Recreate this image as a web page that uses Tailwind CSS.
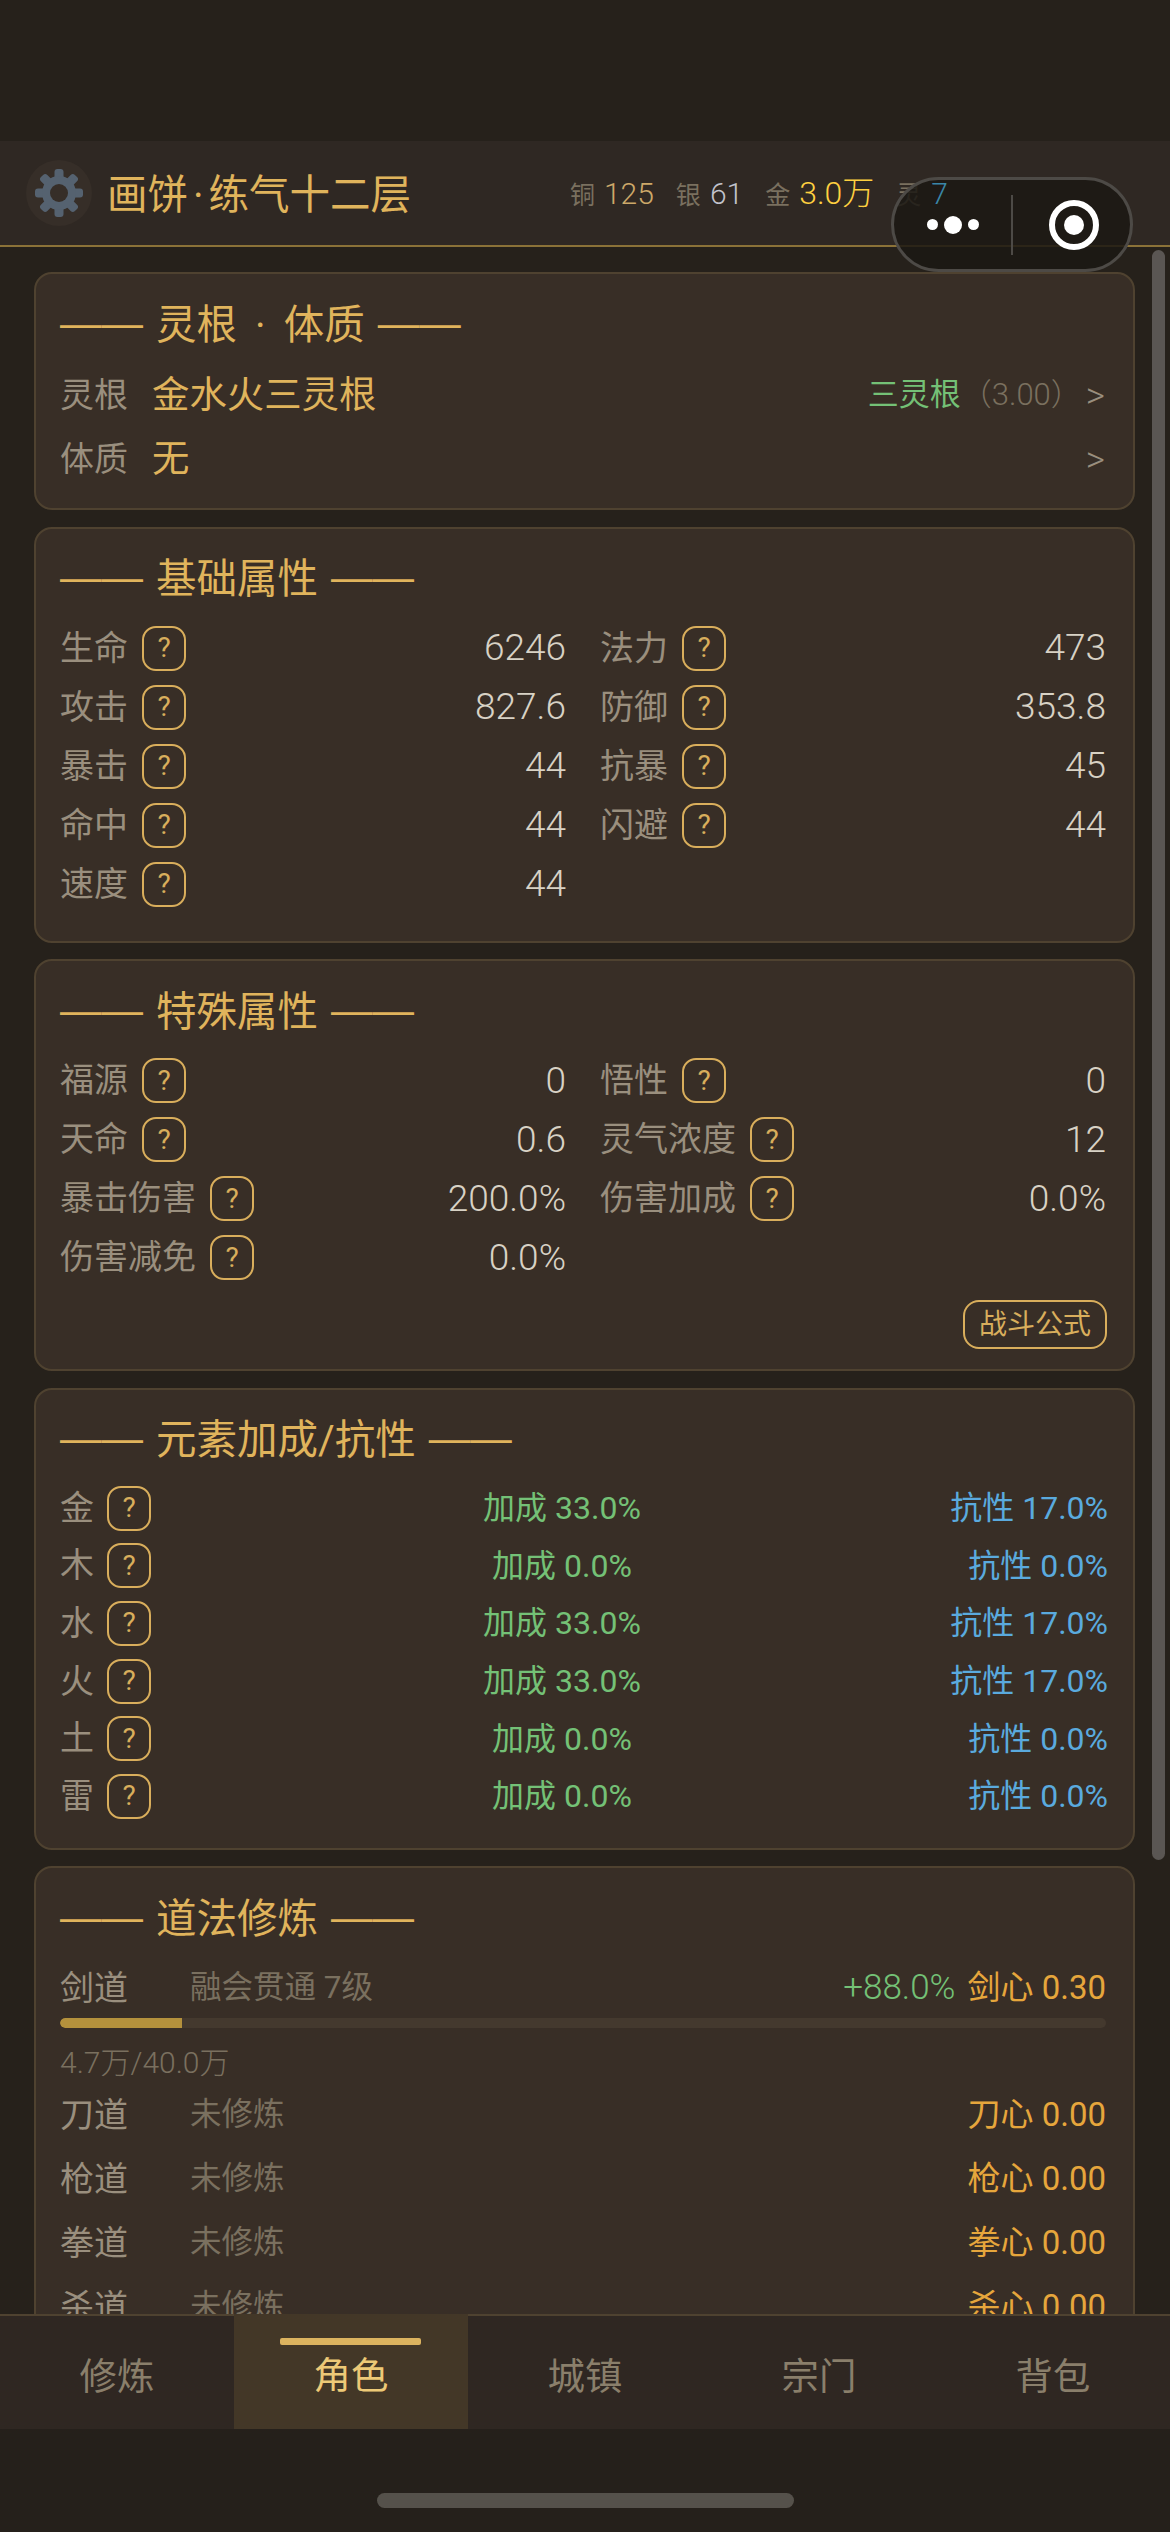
<!doctype html>
<html lang="zh"><head><meta charset="utf-8">
<script src="https://cdn.jsdelivr.net/npm/@tailwindcss/browser@4"></script></head>
<body class="m-0 bg-[#26211b]">
<div class="relative w-[1170px] h-[2532px] overflow-hidden flex flex-col bg-[#26211b] font-['Roboto','Noto_Sans_CJK_SC',sans-serif] font-normal text-[34px] text-[#9a8f7e]">
  <div class="h-[141px] shrink-0"></div>
  <header class="h-[106px] shrink-0 flex items-center bg-[#2f2823] border-b-2 border-[#8b7238] pl-[26px] pr-[222px]">
    <div class="w-[66px] h-[66px] rounded-full bg-[#362e28] flex items-center justify-center mr-[15px]">
      <svg width="50" height="50" viewBox="0 0 50 50"><g fill="#556270"><rect x="20.5" y="1" width="9" height="48" rx="3"/><rect x="20.5" y="1" width="9" height="48" rx="3" transform="rotate(45 25 25)"/><rect x="20.5" y="1" width="9" height="48" rx="3" transform="rotate(90 25 25)"/><rect x="20.5" y="1" width="9" height="48" rx="3" transform="rotate(135 25 25)"/></g><circle cx="25" cy="25" r="13" fill="none" stroke="#556270" stroke-width="8"/><circle cx="25" cy="25" r="9" fill="#362e28"/></svg>
    </div>
    <div class="pt-[4px] text-[40.5px] text-[#e0b45c] whitespace-nowrap">画饼<span class="mx-[5px]">·</span>练气十二层</div>
    <div class="ml-auto flex items-baseline whitespace-nowrap text-[25px] text-[#7a705f]">
      <span>铜</span><span class="text-[30px] font-light ml-[9px] text-[#cda869]">125</span>
      <span class="ml-[22px]">银</span><span class="text-[30px] font-light ml-[9px] text-[#c2c3cc]">61</span>
      <span class="ml-[22px]">金</span><span class="text-[32px] font-light ml-[9px] text-[#ffd040]">3.0万</span>
      <span class="ml-[22px]">灵</span><span class="relative z-10 text-[30px] font-light ml-[10px] text-[#3a87a8]">7</span>
    </div>
  </header>
  <main class="flex-1 min-h-0 overflow-hidden pt-[25px] pl-[34px] flex flex-col gap-[16.5px]">
    <section class="shrink-0 w-[1101px] h-[238px] box-border rounded-[18px] border-2 border-[#4f4230] bg-[#382e26] px-[24px] pt-[18px]">
      <h2 class="h-[62px] pt-[4px] flex items-center gap-[13px] text-[40.5px] font-normal text-[#e0b45c] whitespace-pre"><span class="-translate-y-[2px] font-['Liberation_Sans',sans-serif] text-[41.5px]">——</span><span>灵根 <span class="mx-[8px]">·</span> 体质</span><span class="-translate-y-[2px] font-['Liberation_Sans',sans-serif] text-[41.5px]">——</span></h2>
      <div class="mt-[10px] h-[63px] flex items-center"><span class="w-[92px]">灵根</span><span class="text-[37.4px] text-[#e0b45c]">金水火三灵根</span><span class="ml-auto text-[31px] text-[#74c176]">三灵根</span><span class="text-[31px] font-light text-[#7a705f]">（3.00）</span><span class="text-[37px] font-light ml-[4px] mr-[4px]">&gt;</span></div>
      <div class="h-[63px] pt-[2px] flex items-center"><span class="w-[92px]">体质</span><span class="text-[37.4px] text-[#e0b45c]">无</span><span class="ml-auto text-[37px] font-light mr-[4px]">&gt;</span></div>
    </section>

    <section class="shrink-0 w-[1101px] h-[416px] box-border rounded-[18px] border-2 border-[#4f4230] bg-[#382e26] px-[24px] pt-[18px]">
      <h2 class="h-[62px] pt-[4px] flex items-center gap-[13px] text-[40.5px] font-normal text-[#e0b45c] whitespace-pre"><span class="-translate-y-[2px] font-['Liberation_Sans',sans-serif] text-[41.5px]">——</span><span>基础属性</span><span class="-translate-y-[2px] font-['Liberation_Sans',sans-serif] text-[41.5px]">——</span></h2>
      <div class="mt-[10px] grid grid-cols-2 gap-x-[34px] auto-rows-[59px] pr-[3px]">
        <div class="flex items-center"><span>生命</span><span class="ml-[14px] w-[44px] h-[45px] box-border rounded-[14px] border-2 border-[#d9ae5c] flex items-center justify-center text-[28px] text-[#d9ae5c]">?</span><span class="ml-auto text-[37px] font-light text-[#d8d2c5]">6246</span></div>
        <div class="flex items-center"><span>法力</span><span class="ml-[14px] w-[44px] h-[45px] box-border rounded-[14px] border-2 border-[#d9ae5c] flex items-center justify-center text-[28px] text-[#d9ae5c]">?</span><span class="ml-auto text-[37px] font-light text-[#d8d2c5]">473</span></div>
        <div class="flex items-center"><span>攻击</span><span class="ml-[14px] w-[44px] h-[45px] box-border rounded-[14px] border-2 border-[#d9ae5c] flex items-center justify-center text-[28px] text-[#d9ae5c]">?</span><span class="ml-auto text-[37px] font-light text-[#d8d2c5]">827.6</span></div>
        <div class="flex items-center"><span>防御</span><span class="ml-[14px] w-[44px] h-[45px] box-border rounded-[14px] border-2 border-[#d9ae5c] flex items-center justify-center text-[28px] text-[#d9ae5c]">?</span><span class="ml-auto text-[37px] font-light text-[#d8d2c5]">353.8</span></div>
        <div class="flex items-center"><span>暴击</span><span class="ml-[14px] w-[44px] h-[45px] box-border rounded-[14px] border-2 border-[#d9ae5c] flex items-center justify-center text-[28px] text-[#d9ae5c]">?</span><span class="ml-auto text-[37px] font-light text-[#d8d2c5]">44</span></div>
        <div class="flex items-center"><span>抗暴</span><span class="ml-[14px] w-[44px] h-[45px] box-border rounded-[14px] border-2 border-[#d9ae5c] flex items-center justify-center text-[28px] text-[#d9ae5c]">?</span><span class="ml-auto text-[37px] font-light text-[#d8d2c5]">45</span></div>
        <div class="flex items-center"><span>命中</span><span class="ml-[14px] w-[44px] h-[45px] box-border rounded-[14px] border-2 border-[#d9ae5c] flex items-center justify-center text-[28px] text-[#d9ae5c]">?</span><span class="ml-auto text-[37px] font-light text-[#d8d2c5]">44</span></div>
        <div class="flex items-center"><span>闪避</span><span class="ml-[14px] w-[44px] h-[45px] box-border rounded-[14px] border-2 border-[#d9ae5c] flex items-center justify-center text-[28px] text-[#d9ae5c]">?</span><span class="ml-auto text-[37px] font-light text-[#d8d2c5]">44</span></div>
        <div class="flex items-center"><span>速度</span><span class="ml-[14px] w-[44px] h-[45px] box-border rounded-[14px] border-2 border-[#d9ae5c] flex items-center justify-center text-[28px] text-[#d9ae5c]">?</span><span class="ml-auto text-[37px] font-light text-[#d8d2c5]">44</span></div>
      </div>
    </section>

    <section class="shrink-0 w-[1101px] h-[412px] box-border rounded-[18px] border-2 border-[#4f4230] bg-[#382e26] px-[24px] pt-[18px]">
      <h2 class="h-[62px] pt-[4px] flex items-center gap-[13px] text-[40.5px] font-normal text-[#e0b45c] whitespace-pre"><span class="-translate-y-[2px] font-['Liberation_Sans',sans-serif] text-[41.5px]">——</span><span>特殊属性</span><span class="-translate-y-[2px] font-['Liberation_Sans',sans-serif] text-[41.5px]">——</span></h2>
      <div class="mt-[10px] grid grid-cols-2 gap-x-[34px] auto-rows-[59px] pr-[3px]">
        <div class="flex items-center"><span>福源</span><span class="ml-[14px] w-[44px] h-[45px] box-border rounded-[14px] border-2 border-[#d9ae5c] flex items-center justify-center text-[28px] text-[#d9ae5c]">?</span><span class="ml-auto text-[37px] font-light text-[#d8d2c5]">0</span></div>
        <div class="flex items-center"><span>悟性</span><span class="ml-[14px] w-[44px] h-[45px] box-border rounded-[14px] border-2 border-[#d9ae5c] flex items-center justify-center text-[28px] text-[#d9ae5c]">?</span><span class="ml-auto text-[37px] font-light text-[#d8d2c5]">0</span></div>
        <div class="flex items-center"><span>天命</span><span class="ml-[14px] w-[44px] h-[45px] box-border rounded-[14px] border-2 border-[#d9ae5c] flex items-center justify-center text-[28px] text-[#d9ae5c]">?</span><span class="ml-auto text-[37px] font-light text-[#d8d2c5]">0.6</span></div>
        <div class="flex items-center"><span>灵气浓度</span><span class="ml-[14px] w-[44px] h-[45px] box-border rounded-[14px] border-2 border-[#d9ae5c] flex items-center justify-center text-[28px] text-[#d9ae5c]">?</span><span class="ml-auto text-[37px] font-light text-[#d8d2c5]">12</span></div>
        <div class="flex items-center"><span>暴击伤害</span><span class="ml-[14px] w-[44px] h-[45px] box-border rounded-[14px] border-2 border-[#d9ae5c] flex items-center justify-center text-[28px] text-[#d9ae5c]">?</span><span class="ml-auto text-[37px] font-light text-[#d8d2c5]">200.0%</span></div>
        <div class="flex items-center"><span>伤害加成</span><span class="ml-[14px] w-[44px] h-[45px] box-border rounded-[14px] border-2 border-[#d9ae5c] flex items-center justify-center text-[28px] text-[#d9ae5c]">?</span><span class="ml-auto text-[37px] font-light text-[#d8d2c5]">0.0%</span></div>
        <div class="flex items-center"><span>伤害减免</span><span class="ml-[14px] w-[44px] h-[45px] box-border rounded-[14px] border-2 border-[#d9ae5c] flex items-center justify-center text-[28px] text-[#d9ae5c]">?</span><span class="ml-auto text-[37px] font-light text-[#d8d2c5]">0.0%</span></div>
      </div>
      <div class="mt-[13px] flex justify-end pr-[2px]"><span class="w-[144px] h-[49px] box-border rounded-[16px] border-2 border-[#d9ae5c] flex items-center justify-center text-[28px] text-[#d9ae5c]">战斗公式</span></div>
    </section>

    <section class="shrink-0 w-[1101px] h-[462px] box-border rounded-[18px] border-2 border-[#4f4230] bg-[#382e26] px-[24px] pt-[18px]">
      <h2 class="h-[62px] pt-[4px] flex items-center gap-[13px] text-[40.5px] font-normal text-[#e0b45c] whitespace-pre"><span class="-translate-y-[2px] font-['Liberation_Sans',sans-serif] text-[41.5px]">——</span><span>元素加成/抗性</span><span class="-translate-y-[2px] font-['Liberation_Sans',sans-serif] text-[41.5px]">——</span></h2>
      <div class="mt-[10px] grid grid-cols-[150px_704px_1fr] auto-rows-[57.6px] items-center pr-[1px] text-[32px]">
        <div class="flex items-center text-[34px]"><span>金</span><span class="ml-[13px] w-[44px] h-[45px] box-border rounded-[14px] border-2 border-[#d9ae5c] flex items-center justify-center text-[28px] text-[#d9ae5c]">?</span></div><div class="text-center text-[#74c176]">加成 33.0%</div><div class="text-right text-[#5aaade]">抗性 17.0%</div>
        <div class="flex items-center text-[34px]"><span>木</span><span class="ml-[13px] w-[44px] h-[45px] box-border rounded-[14px] border-2 border-[#d9ae5c] flex items-center justify-center text-[28px] text-[#d9ae5c]">?</span></div><div class="text-center text-[#74c176]">加成 0.0%</div><div class="text-right text-[#5aaade]">抗性 0.0%</div>
        <div class="flex items-center text-[34px]"><span>水</span><span class="ml-[13px] w-[44px] h-[45px] box-border rounded-[14px] border-2 border-[#d9ae5c] flex items-center justify-center text-[28px] text-[#d9ae5c]">?</span></div><div class="text-center text-[#74c176]">加成 33.0%</div><div class="text-right text-[#5aaade]">抗性 17.0%</div>
        <div class="flex items-center text-[34px]"><span>火</span><span class="ml-[13px] w-[44px] h-[45px] box-border rounded-[14px] border-2 border-[#d9ae5c] flex items-center justify-center text-[28px] text-[#d9ae5c]">?</span></div><div class="text-center text-[#74c176]">加成 33.0%</div><div class="text-right text-[#5aaade]">抗性 17.0%</div>
        <div class="flex items-center text-[34px]"><span>土</span><span class="ml-[13px] w-[44px] h-[45px] box-border rounded-[14px] border-2 border-[#d9ae5c] flex items-center justify-center text-[28px] text-[#d9ae5c]">?</span></div><div class="text-center text-[#74c176]">加成 0.0%</div><div class="text-right text-[#5aaade]">抗性 0.0%</div>
        <div class="flex items-center text-[34px]"><span>雷</span><span class="ml-[13px] w-[44px] h-[45px] box-border rounded-[14px] border-2 border-[#d9ae5c] flex items-center justify-center text-[28px] text-[#d9ae5c]">?</span></div><div class="text-center text-[#74c176]">加成 0.0%</div><div class="text-right text-[#5aaade]">抗性 0.0%</div>
      </div>
    </section>

    <section class="shrink-0 w-[1101px] box-border rounded-[18px] border-2 border-[#4f4230] bg-[#382e26] px-[24px] pt-[18px] pb-[24px]">
      <h2 class="h-[62px] pt-[4px] flex items-center gap-[13px] text-[40.5px] font-normal text-[#e0b45c] whitespace-pre"><span class="-translate-y-[2px] font-['Liberation_Sans',sans-serif] text-[41.5px]">——</span><span>道法修炼</span><span class="-translate-y-[2px] font-['Liberation_Sans',sans-serif] text-[41.5px]">——</span></h2>
      <div class="mt-[9px] h-[62px] flex items-center pr-[3px]"><span class="w-[130px]">剑道</span><span class="text-[31.5px] text-[#7a705f]">融会贯通 7级</span><span class="ml-auto text-[35px] font-light text-[#74c176]">+88.0%</span><span class="ml-[12px] text-[33px] text-[#e6a63c]">剑心 0.30</span></div>
      <div class="-mt-[1px] mr-[3px] h-[10px] rounded-full bg-[#44392e] overflow-hidden"><div class="w-[122px] h-full rounded-l-full bg-[#b4913c]"></div></div>
      <div class="mt-[12px] h-[44px] flex items-center text-[30px] font-light text-[#7a705f]">4.7万/40.0万</div>
      <div class="h-[64px] -mt-[1px] flex items-center pr-[3px]"><span class="w-[130px]">刀道</span><span class="text-[31.5px] text-[#7a705f]">未修炼</span><span class="ml-auto text-[33px] text-[#e6a63c]">刀心 0.00</span></div>
      <div class="h-[64px] flex items-center pr-[3px]"><span class="w-[130px]">枪道</span><span class="text-[31.5px] text-[#7a705f]">未修炼</span><span class="ml-auto text-[33px] text-[#e6a63c]">枪心 0.00</span></div>
      <div class="h-[64px] flex items-center pr-[3px]"><span class="w-[130px]">拳道</span><span class="text-[31.5px] text-[#7a705f]">未修炼</span><span class="ml-auto text-[33px] text-[#e6a63c]">拳心 0.00</span></div>
      <div class="h-[64px] flex items-center pr-[3px]"><span class="w-[130px]">杀道</span><span class="text-[31.5px] text-[#7a705f]">未修炼</span><span class="ml-auto text-[33px] text-[#e6a63c]">杀心 0.00</span></div>
    </section>
  </main>
  <nav class="h-[115px] shrink-0 grid grid-cols-5 box-border bg-[#2f2722] border-t-2 border-[#4f4230] text-[37.4px] text-[#8a7f6b]">
    <div class="pt-[9px] flex items-center justify-center">修炼</div>
    <div class="relative -mt-[2px] pt-[9px] flex items-center justify-center bg-[#433727] text-[#edc977]">角色<span class="absolute left-[46px] top-[24px] w-[141px] h-[7px] rounded-[2px] bg-[#dcb35f]"></span></div>
    <div class="pt-[9px] flex items-center justify-center">城镇</div>
    <div class="pt-[9px] flex items-center justify-center">宗门</div>
    <div class="pt-[9px] flex items-center justify-center">背包</div>
  </nav>
  <div class="flex-none h-[103px] flex justify-center pt-[64px] bg-[#25201b]"><div class="w-[417px] h-[15px] rounded-full bg-[#55514b]"></div></div>

  <div class="absolute left-[1152px] top-[250px] w-[13px] h-[1610px] rounded-full bg-[#5a5653]"></div>
  <div class="absolute left-[891px] top-[177px] w-[242px] h-[95px] box-border rounded-full border-[3px] border-[#4d4a46] bg-[#1b1713]/85">
    <span class="absolute left-[33px] top-[39px] w-[11px] h-[11px] rounded-full bg-white"></span>
    <span class="absolute left-[50px] top-[36px] w-[18px] h-[18px] rounded-full bg-white"></span>
    <span class="absolute left-[74px] top-[39px] w-[11px] h-[11px] rounded-full bg-white"></span>
    <span class="absolute left-[117px] top-[15px] w-[2px] h-[60px] bg-[#4d4a46]"></span>
    <span class="absolute left-[155px] top-[20px] w-[50px] h-[50px] box-border rounded-full border-[6px] border-white"></span>
    <span class="absolute left-[170px] top-[35px] w-[20px] h-[20px] rounded-full bg-white"></span>
  </div>
</div>
</body></html>
